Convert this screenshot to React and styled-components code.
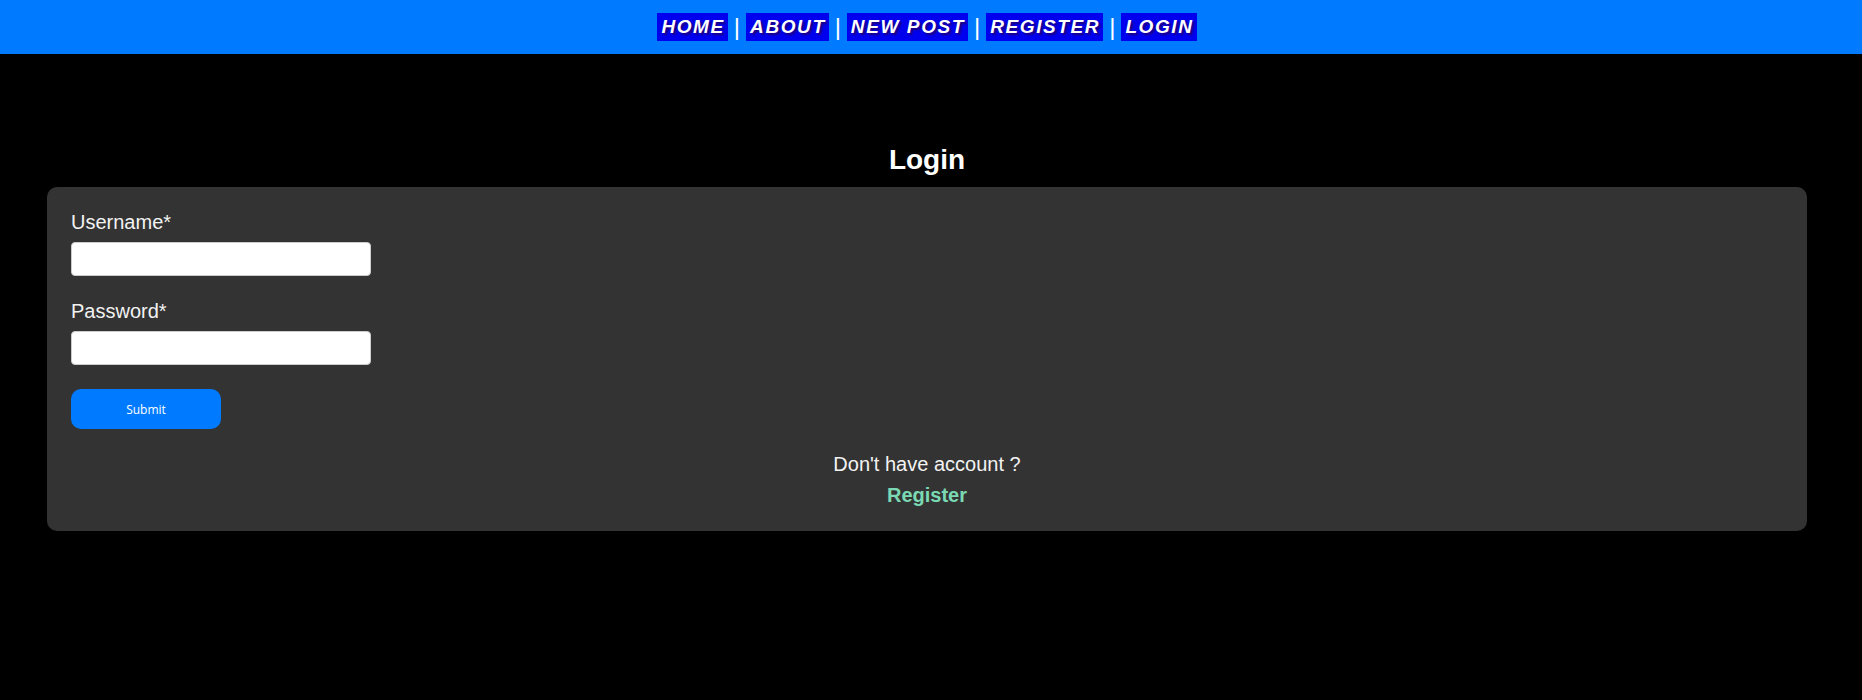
import React from "react";
import styled, { createGlobalStyle } from "styled-components";

const GlobalStyle = createGlobalStyle`
  html, body {
    margin: 0;
    padding: 0;
    background-color: #000;
    font-family: "Liberation Sans", Arial, sans-serif;
  }
  * {
    box-sizing: border-box;
  }
`;

const NavBar = styled.nav`
  height: 54px;
  background-color: #007bff;
  display: flex;
  align-items: center;
  justify-content: center;
  padding-right: 8px;
`;

const NavLink = styled.a`
  display: inline-block;
  height: 28px;
  line-height: 28px;
  padding: 0 3px 0 4px;
  background-color: #0000ee;
  color: #fff;
  font-size: 19px;
  font-weight: 700;
  font-style: italic;
  letter-spacing: 1.6px;
  text-transform: uppercase;
  text-decoration: none;
  text-shadow: 2px 2px 2px rgba(40, 0, 90, 0.8);
`;

const Separator = styled.span`
  color: #fff;
  font-size: 24px;
  line-height: 28px;
  margin: 0 6px;
`;

const Page = styled.main`
  padding: 90px 55px 40px 47px;
`;

const Title = styled.h1`
  margin: 0 0 11px;
  text-align: center;
  color: #fff;
  font-size: 28px;
  line-height: 32px;
  font-weight: 700;
`;

const Card = styled.div`
  background-color: #333;
  border-radius: 10px;
  padding: 24px;
  display: flex;
  flex-direction: column;
`;

const Field = styled.div`
  display: flex;
  flex-direction: column;
  align-items: flex-start;
  margin-bottom: 24px;
`;

const Label = styled.label`
  color: #f2f2f2;
  font-size: 20px;
  line-height: 23px;
  margin-bottom: 8px;
`;

const Input = styled.input`
  width: 300px;
  height: 34px;
  border: 1px solid #ccc;
  border-radius: 4px;
  background: #fff;
  padding: 4px 8px;
  font-size: 16px;
  outline: none;
`;

const SubmitButton = styled.button`
  width: 150px;
  height: 40px;
  border: none;
  border-radius: 10px;
  background-color: #007bff;
  color: #fff;
  font-family: "Open Sans", "DejaVu Sans", sans-serif;
  font-size: 12px;
  cursor: pointer;
  margin-bottom: 24px;
`;

const Footer = styled.div`
  display: flex;
  flex-direction: column;
  align-items: center;
  gap: 8px;
`;

const FooterText = styled.p`
  margin: 0;
  color: #f2f2f2;
  font-size: 20px;
  line-height: 23px;
`;

const RegisterLink = styled.a`
  color: #7ad9b4;
  font-size: 20px;
  line-height: 23px;
  font-weight: 700;
  text-decoration: none;
`;

const links = ["Home", "About", "New Post", "Register", "Login"];

export default function App() {
  return (
    <>
      <GlobalStyle />
      <NavBar>
        {links.map((l, i) => (
          <React.Fragment key={l}>
            {i > 0 && <Separator>|</Separator>}
            <NavLink href="#">{l}</NavLink>
          </React.Fragment>
        ))}
      </NavBar>
      <Page>
        <Title>Login</Title>
        <Card>
          <Field>
            <Label>Username*</Label>
            <Input type="text" />
          </Field>
          <Field>
            <Label>Password*</Label>
            <Input type="password" />
          </Field>
          <div>
            <SubmitButton type="submit">Submit</SubmitButton>
          </div>
          <Footer>
            <FooterText>Don't have account ?</FooterText>
            <RegisterLink href="#">Register</RegisterLink>
          </Footer>
        </Card>
      </Page>
    </>
  );
}
